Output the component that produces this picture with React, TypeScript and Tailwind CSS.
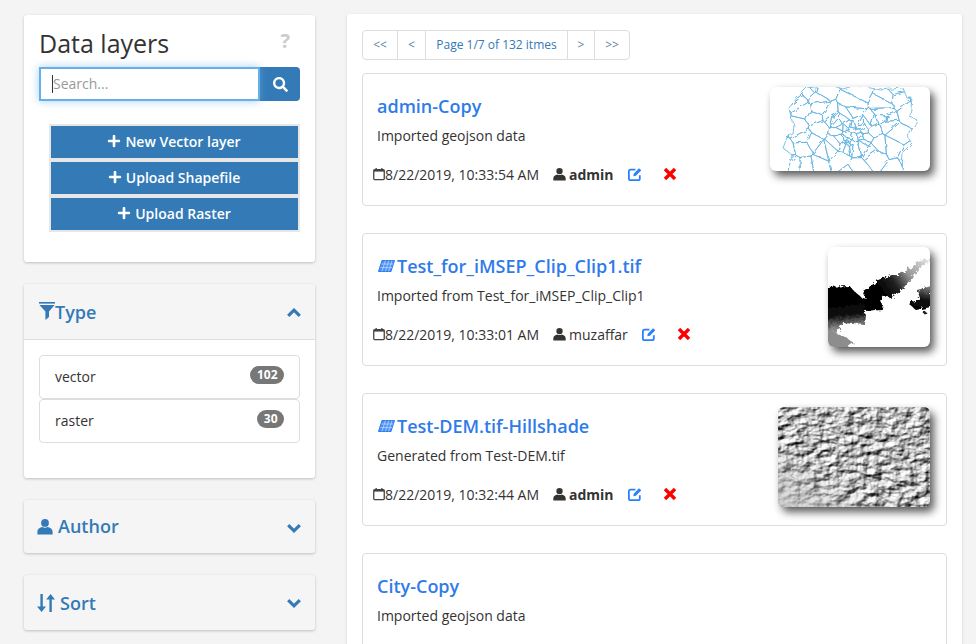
import { FaPlus, FaSearch } from 'react-icons/fa';

const FONT = "[font-family:'Open_Sans',sans-serif]";

/* ─── Small drawn icons ───────────────────────────────────────── */
function UserIcon({ className }: { className?: string }) {
  return (
    <svg viewBox="0 0 16 16" className={className} fill="currentColor">
      <circle cx="8" cy="4.4" r="3.9" />
      <path d="M0.4 16v-2.6C0.4 10.4 3 9 5.4 8.6c1.5 1 3.7 1 5.2 0 2.4.4 5 1.8 5 4.8V16z" />
    </svg>
  );
}

function FilterIcon() {
  return (
    <svg viewBox="0 0 16 18" className="w-[16px] h-[18px]" fill="currentColor">
      <rect x="0" y="0" width="16" height="1.6" />
      <path d="M0.4 3h15.2L10 9.4V15l-3.6 3V9.4z" />
    </svg>
  );
}

function SortIcon() {
  return (
    <svg viewBox="0 0 18 18" className="w-[18px] h-[18px]" fill="currentColor">
      <path d="M3.4 0h2.4v12.6H9L4.6 18 0 12.6h3.4z" />
      <path d="M12.4 18h2.4V5.4H18L13.6 0 9.2 5.4h3.2z" />
    </svg>
  );
}

function CalendarIcon() {
  return (
    <svg viewBox="0 0 13 14" className="w-[12px] h-[14px] shrink-0" fill="none" stroke="#444" strokeWidth="1.4">
      <rect x="0.8" y="2.4" width="11.4" height="10.8" rx="1.4" />
      <path d="M0.8 3.2h11.4" strokeWidth="2.4" />
      <path d="M3.4 0.4v2M9.6 0.4v2" />
    </svg>
  );
}

function LayerIcon() {
  return (
    <svg viewBox="0 0 17 12" className="w-[17px] h-[12px] shrink-0 ml-[1px] mr-[2px]" fill="none" stroke="#2a7bf0">
      <path d="M4 0.5h12.5L13 11.5H0.5z" fill="#4d92f2" strokeWidth="1" />
      <path d="M3.4 4h12M2.3 7.6h12M7.4 0.5L4 11.5M10.8 0.5L7.4 11.5M14 0.5l-3.4 11" stroke="#dbe8fd" strokeWidth="0.6" />
    </svg>
  );
}

function EditIcon() {
  return (
    <svg viewBox="0 0 16 16" className="w-[14px] h-[14px] ml-[14px] shrink-0" fill="none" stroke="#2a7fff" strokeWidth="2">
      <path d="M13.5 9.5V13a2 2 0 0 1-2 2H3a2 2 0 0 1-2-2V5a2 2 0 0 1 2-2h5.5" />
      <path d="M6 10.6l.6-3L12.6 1.4l2.6 2.4-6.2 6.2z" fill="#2a7fff" stroke="none" />
    </svg>
  );
}

function RemoveIcon() {
  return (
    <svg viewBox="0 0 12 12" className="w-[12px] h-[12px] ml-[22px] shrink-0" stroke="#ff0000" strokeWidth="3.4">
      <path d="M1 1l10 10M11 1L1 11" />
    </svg>
  );
}

function Chevron({ up, className = '' }: { up?: boolean; className?: string }) {
  return (
    <svg viewBox="0 0 14 9" className={`ml-auto w-[14px] h-[9px] shrink-0 ${className}`} fill="none" stroke="#337ab7" strokeWidth="3.2">
      <path d={up ? 'M1.2 7.8L7 2.2l5.8 5.6' : 'M1.2 1.2L7 6.8l5.8-5.6'} />
    </svg>
  );
}

/* ─── Thumbnails ──────────────────────────────────────────────── */
// seeded voronoi so the boundaries read as admin districts, dense in the city centre
function buildCells() {
  let s = 19;
  const rnd = () => {
    s = (s * 16807) % 2147483647;
    return s / 2147483647;
  };
  const seeds: [number, number][] = [];
  for (let i = 0; i < 64; i++) seeds.push([6 + rnd() * 148, rnd() * 94 - 4]);
  for (let i = 0; i < 16; i++) seeds.push([50 + rnd() * 62, 26 + rnd() * 40]);
  for (let i = 0; i < 22; i++) seeds.push([66 + rnd() * 30, 36 + rnd() * 24]);
  return seeds
    .map(([x, y], i) => {
      let poly: [number, number][] = [[0, -5], [160, -5], [160, 90], [0, 90]];
      seeds.forEach(([ox, oy], j) => {
        if (i === j) return;
        const nx = ox - x, ny = oy - y;
        const c = (ox * ox + oy * oy - x * x - y * y) / 2;
        const next: [number, number][] = [];
        poly.forEach((p, k) => {
          const q = poly[(k + 1) % poly.length];
          const dp = p[0] * nx + p[1] * ny - c;
          const dq = q[0] * nx + q[1] * ny - c;
          if (dp <= 0) next.push(p);
          if (dp * dq < 0) {
            const t = dp / (dp - dq);
            next.push([p[0] + (q[0] - p[0]) * t, p[1] + (q[1] - p[1]) * t]);
          }
        });
        poly = next;
      });
      return 'M' + poly.map((p) => `${p[0].toFixed(1)} ${p[1].toFixed(1)}`).join('L') + 'z';
    })
    .join('');
}

const MAP_CELLS = buildCells();
const MAP_OUTLINE = 'M27 11L37 1L60 -2L73 2L86 -2L110 3L133 1L137 11L142 11L140 30L147 33L138 50L142 56L133 65L132 88L17 88L22 68L13 61L18 48L22 46L23 38L19 21z';

function MapThumb() {
  return (
    <svg viewBox="0 0 160 84" className="w-[160px] h-[84px] block bg-white rounded-[6px] shadow-[4px_5px_8px_rgba(0,0,0,0.65)] shrink-0" fill="none" stroke="#62b2e0" strokeWidth="0.8" strokeLinejoin="round">
      <defs>
        <clipPath id="mapclip"><path d={MAP_OUTLINE} /></clipPath>
        <filter id="wiggle" x="0" y="0" width="100%" height="100%">
          <feTurbulence type="fractalNoise" baseFrequency="0.14" numOctaves="2" seed="3" />
          <feDisplacementMap in="SourceGraphic" scale="5" />
        </filter>
      </defs>
      <g filter="url(#wiggle)">
        <path d={MAP_CELLS} clipPath="url(#mapclip)" />
        <path d={MAP_OUTLINE} />
      </g>
    </svg>
  );
}

function RasterThumb() {
  return (
    <svg viewBox="0 0 102 100" className="w-[102px] h-[100px] block bg-white rounded-[6px] shadow-[4px_5px_8px_rgba(0,0,0,0.65)] shrink-0">
      <defs>
        <linearGradient id="dem" gradientUnits="userSpaceOnUse" x1="52" y1="44" x2="98" y2="12">
          <stop offset="0" stopColor="#000" />
          <stop offset="0.3" stopColor="#222" />
          <stop offset="0.6" stopColor="#999" />
          <stop offset="1" stopColor="#ddd" />
        </linearGradient>
        <linearGradient id="demright" x1="0.5" y1="0" x2="0.3" y2="1">
          <stop offset="0" stopColor="#777" />
          <stop offset="0.5" stopColor="#111" />
          <stop offset="1" stopColor="#000" />
        </linearGradient>
        <linearGradient id="demlow" x1="0" y1="0" x2="0.15" y2="1">
          <stop offset="0" stopColor="#000" />
          <stop offset="0.45" stopColor="#111" />
          <stop offset="0.75" stopColor="#777" />
          <stop offset="1" stopColor="#aaa" />
        </linearGradient>
        <filter id="rough" x="-5%" y="-5%" width="110%" height="110%">
          <feTurbulence type="fractalNoise" baseFrequency="0.28" numOctaves="3" seed="4" />
          <feDisplacementMap in="SourceGraphic" scale="6" />
          <feGaussianBlur stdDeviation="0.3" />
        </filter>
      </defs>
      <g filter="url(#rough)">
        <path d="M-3 40L22 39L25 43L33 50L38 52L35 44L47 36L50 33L58 30L64 28L70 28L78 24L85 19L92 14L103 11L101 16L92 20L86 27L82 33L72 45L62 51L57 48L53 53L55 63L37 64L30 64L-3 64z" fill="url(#dem)" />
        <path d="M-3 56L38 56L37 66L36 78L15 76L7 88L-3 86z" fill="url(#demlow)" />
        <path d="M-3 84L8 86L20 92L26 96L15 103L-3 103z" fill="#8d8d8d" />
        <path d="M103 39L89 43L92 51L81 57L88 63L103 60z" fill="url(#demright)" />
        <path d="M36 65L48 63L49 65L37 67z" fill="#fff" />
        <circle cx="97" cy="66" r="1.4" fill="#222" />
      </g>
    </svg>
  );
}

function HillshadeThumb() {
  return (
    <svg viewBox="0 0 152 100" className="w-[152px] h-[100px] block bg-[#bbb] rounded-[6px] shadow-[4px_5px_8px_rgba(0,0,0,0.65)] shrink-0">
      <defs>
        <filter id="hill" x="0" y="0" width="100%" height="100%" colorInterpolationFilters="sRGB">
          <feTurbulence type="fractalNoise" baseFrequency="0.08 0.13" numOctaves="4" seed="23" />
          <feDiffuseLighting surfaceScale="4" diffuseConstant="1.05" lightingColor="#ffffff">
            <feDistantLight azimuth="225" elevation="45" />
          </feDiffuseLighting>
          <feGaussianBlur stdDeviation="0.25" />
        </filter>
        <linearGradient id="plain" x1="0" y1="1" x2="0.35" y2="0.6">
          <stop offset="0" stopColor="#c8c8c8" stopOpacity="0.85" />
          <stop offset="1" stopColor="#c8c8c8" stopOpacity="0" />
        </linearGradient>
      </defs>
      <rect width="152" height="100" filter="url(#hill)" />
      <rect width="152" height="100" fill="url(#plain)" />
    </svg>
  );
}

/* ─── Left column ─────────────────────────────────────────────── */
const panelCls = 'w-[291px] rounded-[3px] shadow-[0_1px_3px_rgba(0,0,0,0.22)] overflow-hidden';

function CollapsedPanel({ icon, title, height, textCls, chevronCls }: { icon: React.ReactNode; title: string; height: string; textCls: string; chevronCls: string }) {
  return (
    <div className={`${panelCls} bg-[#f5f5f5] ${height} mt-[22px] flex items-center pl-[13px] pr-[14px] text-[#337ab7]`}>
      <span className="shrink-0">{icon}</span>
      <span className={`text-[18px] font-semibold ${textCls}`}>{title}</span>
      <Chevron className={chevronCls} />
    </div>
  );
}

function TypeRow({ label, count }: { label: string; count: number }) {
  return (
    <div className="h-[44px] border border-[#ddd] rounded-[4px] flex items-center justify-between px-[15px] pb-[2px] text-[14px] text-[#333]">
      <span>{label}</span>
      <span className="bg-[#777] text-white text-[12px] font-bold rounded-[10px] px-[6.5px] h-[18px] leading-[17px] -mt-[2px]">{count}</span>
    </div>
  );
}

function Sidebar() {
  return (
    <div className="w-[291px] shrink-0 flex flex-col pt-[15px]">
      <div className={`${panelCls} bg-white h-[247px] pl-[15px] pr-[15px] pt-[10px]`}>
        <div className="flex items-start justify-between h-[42px]">
          <h1 className="text-[25px] leading-[36px] text-[#333]">Data layers</h1>
          <span className="text-[20px] font-bold text-[#ccc] leading-[30px] mt-[1px] mr-[10px]">?</span>
        </div>
        <div className="flex h-[35px]">
          <div className="relative z-10">
            <input
              placeholder="Search..."
              className="block w-[221px] h-[34px] border-2 border-[#66afe9] shadow-[0_0_8px_rgba(102,175,233,0.6)] pl-[12px] pr-[11px] pb-[2px] text-[14px] outline-none placeholder:text-[#999] text-[#555]"
            />
            {/* text caret of the focused field */}
            <span className="absolute left-[13px] top-[8px] w-px h-[18px] bg-[#333]" />
          </div>
          <button className="w-[40px] h-[34px] bg-[#337ab7] text-white flex items-center justify-center rounded-r-[4px]">
            <FaSearch className="w-[15px] h-[15px]" />
          </button>
        </div>
        <div className="mt-[22px] ml-[10px] flex flex-col">
          {['New Vector layer', 'Upload Shapefile', 'Upload Raster'].map((t) => (
            <button key={t} className="h-[36px] w-[251px] border-2 border-[#e7e7e7] bg-[#337ab7] text-white text-[14px] font-semibold flex items-center justify-center gap-[4px] pb-[2px] pr-[1px]">
              <FaPlus className="w-[14px] h-[14px]" />
              {t}
            </button>
          ))}
        </div>
      </div>

      <div className={`${panelCls} bg-white mt-[22px] h-[194px]`}>
        <div className="h-[56px] bg-[#f5f5f5] border-b border-[#ddd] flex items-center pl-[15px] pr-[14px] pt-[2px] text-[#337ab7]">
          <span className="-mt-[4px]"><FilterIcon /></span>
          <span className="text-[18px] font-semibold">Type</span>
          <Chevron up />
        </div>
        <div className="pl-[15px] pr-[15px] pt-[15px]">
          <TypeRow label="vector" count={102} />
          <TypeRow label="raster" count={30} />
        </div>
      </div>

      <CollapsedPanel icon={<UserIcon className="w-[16px] h-[17px] block" />} title="Author" height="h-[53px]" textCls="ml-[5px]" chevronCls="mt-[4px]" />
      <CollapsedPanel icon={<SortIcon />} title="Sort" height="h-[55px]" textCls="ml-[5px] mt-[2px]" chevronCls="mt-[2px]" />
    </div>
  );
}

/* ─── Results list ────────────────────────────────────────────── */
function Pager() {
  const cell = 'h-full flex items-center justify-center border-r border-[#ddd] last:border-r-0';
  return (
    <div className="inline-flex h-[30px] border border-[#ddd] rounded-[4px] text-[12px] self-start">
      <span className={`${cell} w-[35px] text-[#5f7f9b]`}>&lt;&lt;</span>
      <span className={`${cell} w-[28px] text-[#5f7f9b]`}>&lt;</span>
      <span className={`${cell} w-[142px] text-[#337ab7]`}>Page 1/7 of 132 itmes</span>
      <span className={`${cell} w-[27px] text-[#5f7f9b]`}>&gt;</span>
      <span className={`${cell} w-[34px] text-[#5f7f9b]`}>&gt;&gt;</span>
    </div>
  );
}

type Layer = {
  title: string;
  desc: string;
  date?: string;
  author?: string;
  bold?: boolean;
  raster?: boolean;
  thumb?: React.ReactNode;
};

const LAYERS: Layer[] = [
  { title: 'admin-Copy', desc: 'Imported geojson data', date: '8/22/2019, 10:33:54 AM', author: 'admin', bold: true, thumb: <MapThumb /> },
  { title: 'Test_for_iMSEP_Clip_Clip1.tif', desc: 'Imported from Test_for_iMSEP_Clip_Clip1', date: '8/22/2019, 10:33:01 AM', author: 'muzaffar', raster: true, thumb: <RasterThumb /> },
  { title: 'Test-DEM.tif-Hillshade', desc: 'Generated from Test-DEM.tif', date: '8/22/2019, 10:32:44 AM', author: 'admin', bold: true, raster: true, thumb: <HillshadeThumb /> },
  { title: 'City-Copy', desc: 'Imported geojson data' },
];

function LayerCard({ layer }: { layer: Layer }) {
  return (
    <div className="h-[133px] shrink-0 border border-[#ddd] rounded-[4px] mb-[27px] flex justify-between pl-[14px] pr-[16px] pt-[13px]">
      <div className="min-w-0">
        <div className="flex items-center h-[38px] text-[18px] font-semibold text-[#2f7bea] leading-none">
          {layer.raster && <LayerIcon />}
          <span>{layer.title}</span>
        </div>
        <p className="text-[14px] leading-[20px] text-[#333] mt-[1px]">{layer.desc}</p>
        {layer.date && (
          <div className="flex items-center mt-[18px] h-[20px] text-[14px] text-[#333] -ml-[4px]">
            <CalendarIcon />
            <span>{layer.date}</span>
            <UserIcon className="w-[13px] h-[14px] ml-[14px] mr-[3px] text-[#333]" />
            <span className={layer.bold ? 'font-bold' : ''}>{layer.author}</span>
            <EditIcon />
            <RemoveIcon />
          </div>
        )}
      </div>
      {layer.thumb}
    </div>
  );
}

export default function App() {
  return (
    <div className={`${FONT} w-[976px] h-[644px] overflow-hidden bg-[#f4f4f4] flex pl-[24px]`}>
      <Sidebar />
      <div className="ml-[32px] mt-[14px] w-[615px] h-[700px] shrink-0 bg-white rounded-[3px] shadow-[0_1px_3px_rgba(0,0,0,0.15)] px-[15px] pt-[16px] flex flex-col">
        <Pager />
        <div className="mt-[13px] flex flex-col">
          {LAYERS.map((l) => (
            <LayerCard key={l.title} layer={l} />
          ))}
        </div>
      </div>
    </div>
  );
}
